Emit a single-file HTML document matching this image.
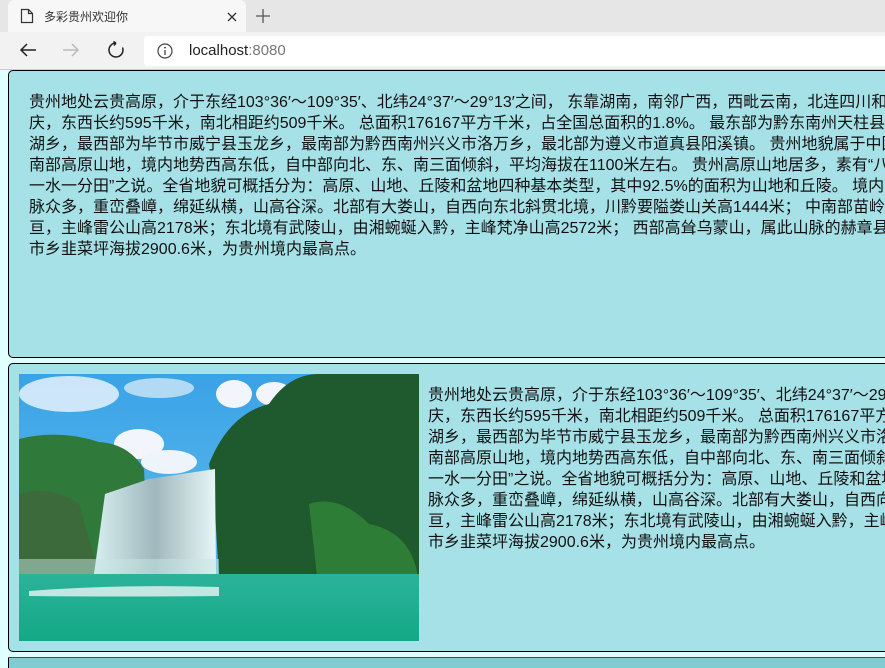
<!DOCTYPE html>
<html><head><meta charset="utf-8"><style>
*{margin:0;padding:0;box-sizing:border-box}
html,body{width:885px;height:664px;overflow:hidden;background:#e0ffff;font-family:"Liberation Sans","Noto Sans CJK SC",sans-serif}
.tabbar{position:absolute;left:0;top:0;width:885px;height:32px;background:#e6e6e6}
.tab{position:absolute;left:8px;top:0;width:238px;height:32px;background:#f7f7f7;border-radius:6px 6px 0 0}
.tab .t{position:absolute;left:36px;top:8px;font-size:12px;color:#333}
.tool{position:absolute;left:0;top:32px;width:885px;height:38px;background:#f2f2f2;border-bottom:1px solid #ccc}
.addr{position:absolute;left:144px;top:4px;width:750px;height:30px;background:#fff;border-radius:4px}
.addr .u{position:absolute;left:45px;top:6px;font-size:15px;color:#222}
.box{position:absolute;left:8px;width:900px;background:#a6e1e8;border:1px solid #000;border-radius:5px}
.txt{position:absolute;font-family:"Liberation Sans","Noto Sans CJK SC",sans-serif;font-size:16px;line-height:21px;color:#111;white-space:nowrap}
</style></head><body>
<div class="tabbar">
 <div class="tab">
  <svg style="position:absolute;left:12px;top:8px" width="14" height="16" viewBox="0 0 14 16"><path d="M1.5 1.5h7l4 4v9h-11z M8.5 1.5v4h4" fill="none" stroke="#333" stroke-width="1.2"/></svg>
  <span class="t">多彩贵州欢迎你</span>
  <svg style="position:absolute;left:219px;top:12px" width="10" height="10"><path d="M1 1l8 8M9 1l-8 8" stroke="#333" stroke-width="1.3"/></svg>
 </div>
 <svg style="position:absolute;left:256px;top:9px" width="14" height="14"><path d="M7 0v14M0 7h14" stroke="#555" stroke-width="1.3"/></svg>
</div>
<div class="tool">
 <svg style="position:absolute;left:19px;top:10px" width="18" height="16"><path d="M17 8H2M8 2L2 8l6 6" fill="none" stroke="#222" stroke-width="1.5"/></svg>
 <svg style="position:absolute;left:62px;top:10px" width="18" height="16"><path d="M1 8h15M10 2l6 6-6 6" fill="none" stroke="#bbb" stroke-width="1.5"/></svg>
 <svg style="position:absolute;left:107px;top:9px" width="18" height="18"><path d="M9 2A7 7 0 1 0 15.5 6.5M9 2l-2.5-1.5M9 2L7 4.5" fill="none" stroke="#222" stroke-width="1.5"/></svg>
 <div class="addr">
  <svg style="position:absolute;left:13px;top:7px" width="16" height="16"><circle cx="8" cy="8" r="7" fill="none" stroke="#444" stroke-width="1.2"/><path d="M8 7v5" stroke="#444" stroke-width="1.3"/><circle cx="8" cy="4.6" r=".9" fill="#444"/></svg>
  <span class="u">localhost<span style="color:#777">:8080</span></span>
 </div>
</div>

<div class="box" style="top:70px;height:288px"></div>
<div class="txt" style="left:29px;top:92px">
贵州地处云贵高原，介于东经103°36′～109°35′、北纬24°37′～29°13′之间， 东靠湖南，南邻广西，西毗云南，北连四川和重<br>
庆，东西长约595千米，南北相距约509千米。 总面积176167平方千米，占全国总面积的1.8%。 最东部为黔东南州天柱县远口<br>
湖乡，最西部为毕节市威宁县玉龙乡，最南部为黔西南州兴义市洛万乡，最北部为遵义市道真县阳溪镇。 贵州地貌属于中国西<br>
南部高原山地，境内地势西高东低，自中部向北、东、南三面倾斜，平均海拔在1100米左右。 贵州高原山地居多，素有“八山<br>
一水一分田”之说。全省地貌可概括分为：高原、山地、丘陵和盆地四种基本类型，其中92.5%的面积为山地和丘陵。 境内山<br>
脉众多，重峦叠嶂，绵延纵横，山高谷深。北部有大娄山，自西向东北斜贯北境，川黔要隘娄山关高1444米； 中南部苗岭横<br>
亘，主峰雷公山高2178米；东北境有武陵山，由湘蜿蜒入黔，主峰梵净山高2572米； 西部高耸乌蒙山，属此山脉的赫章县珠<br>
市乡韭菜坪海拔2900.6米，为贵州境内最高点。</div>

<div class="box" style="top:363px;height:289px"></div>
<svg style="position:absolute;left:19px;top:374px" width="400" height="267" viewBox="0 0 400 267">
<defs>
<linearGradient id="sky" x1="0" y1="0" x2="0" y2="1"><stop offset="0" stop-color="#3aa3e6"/><stop offset="1" stop-color="#6cc2ee"/></linearGradient>
<linearGradient id="wat" x1="0" y1="0" x2="0" y2="1"><stop offset="0" stop-color="#2bb39a"/><stop offset="1" stop-color="#14a886"/></linearGradient>
<linearGradient id="fall" x1="0" y1="0" x2="1" y2="0"><stop offset="0" stop-color="#d8eef0"/><stop offset=".5" stop-color="#9fb8bd"/><stop offset="1" stop-color="#e8f6f6"/></linearGradient>
</defs>
<rect width="400" height="267" fill="url(#sky)"/>
<ellipse cx="50" cy="20" rx="50" ry="18" fill="#e6f1fb" opacity=".85"/>
<ellipse cx="140" cy="14" rx="35" ry="10" fill="#e6f1fb" opacity=".7"/>
<ellipse cx="215" cy="20" rx="18" ry="14" fill="#f2f6fc"/>
<ellipse cx="255" cy="20" rx="18" ry="12" fill="#f2f6fc"/>
<ellipse cx="120" cy="70" rx="25" ry="15" fill="#f2f6fc"/>
<ellipse cx="150" cy="88" rx="28" ry="12" fill="#eef4fb"/>
<path d="M0 65 Q40 55 80 68 Q110 70 125 95 L130 200 L0 200Z" fill="#2f7a3a"/>
<path d="M0 120 Q30 110 60 130 L80 200 L0 200Z" fill="#3d6a3a"/>
<path d="M190 90 Q210 40 250 30 Q270 0 300 0 L400 0 L400 220 L300 220 L200 205 L195 120Z" fill="#1f5a2e"/>
<path d="M290 130 Q320 120 350 150 Q400 160 400 220 L300 220Z" fill="#2e7d36"/>
<path d="M75 200 L86 120 L130 105 L196 95 L197 200Z" fill="url(#fall)"/>
<rect x="0" y="185" width="200" height="20" fill="#c6e6e3" opacity=".5"/>
<rect x="0" y="200" width="400" height="67" fill="url(#wat)"/>
<path d="M10 217 Q100 210 200 213 L200 222 Q100 223 10 222Z" fill="#e9f5f2" opacity=".8"/>
</svg>
<div class="txt" style="left:428px;top:385px">
贵州地处云贵高原，介于东经103°36′～109°35′、北纬24°37′～29°13′之间， 东靠湖南，南邻广西，西毗云南，北连四川和重<br>
庆，东西长约595千米，南北相距约509千米。 总面积176167平方千米，占全国总面积的1.8%。 最东部为黔东南州天柱县远口<br>
湖乡，最西部为毕节市威宁县玉龙乡，最南部为黔西南州兴义市洛万乡，最北部为遵义市道真县阳溪镇。 贵州地貌属于中国西<br>
南部高原山地，境内地势西高东低，自中部向北、东、南三面倾斜，平均海拔在1100米左右。 贵州高原山地居多，素有“八山<br>
一水一分田”之说。全省地貌可概括分为：高原、山地、丘陵和盆地四种基本类型，其中92.5%的面积为山地和丘陵。 境内山<br>
脉众多，重峦叠嶂，绵延纵横，山高谷深。北部有大娄山，自西向东北斜贯北境，川黔要隘娄山关高1444米； 中南部苗岭横<br>
亘，主峰雷公山高2178米；东北境有武陵山，由湘蜿蜒入黔，主峰梵净山高2572米； 西部高耸乌蒙山，属此山脉的赫章县珠<br>
市乡韭菜坪海拔2900.6米，为贵州境内最高点。</div>

<div style="position:absolute;left:8px;top:657px;width:900px;height:1px;background:#e00"></div>
<div style="position:absolute;left:8px;top:658px;width:900px;height:10px;background:#7fcdd2;border-left:1px solid #000"></div>
</body></html>
